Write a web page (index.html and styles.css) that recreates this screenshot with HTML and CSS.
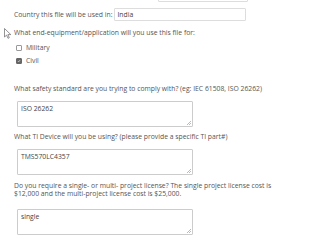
FILE: index.html
```html
<!DOCTYPE html>
<html lang="en">
<head>
    <meta charset="UTF-8">
    <title>License request form</title>
    <link rel="stylesheet" href="styles.css">
</head>
<body>
    <div class="form">
        <div class="row top-row">
            <input class="field field-short" type="text" value="">
        </div>

        <div class="row">
            <label class="inline-label">Country this file will be used in:</label>
            <input class="field field-country" type="text" value="India">
        </div>

        <div class="question pointer-row">
            <svg class="pointer" width="8" height="11" viewBox="0 0 8 11">
                <path d="M0.5 0.5 L0.5 9 L2.6 7.1 L4 10.3 L5.3 9.7 L3.9 6.6 L6.8 6.6 Z" fill="#fff" stroke="#666" stroke-width="0.7"/>
            </svg>
            What end-equipment/application will you use this file for:
        </div>
        <div class="choice first">
            <span class="box"></span> Military
        </div>
        <div class="choice">
            <span class="box checked">
                <svg width="6" height="6" viewBox="0 0 6 6"><path d="M1.3 3.1 L2.5 4.3 L4.7 1.6" fill="none" stroke="#fff" stroke-width="0.9"/></svg>
            </span> Civil
        </div>

        <div class="question spaced">What safety standard are you trying to comply with? (eg: IEC 61508, ISO 26262)</div>
        <textarea class="answer">ISO 26262</textarea>

        <div class="question">What TI Device will you be using? (please provide a specific TI part#)</div>
        <textarea class="answer">TMS570LC4357</textarea>

        <div class="question license">Do you require a single- or multi- project license? The single project license cost is<br>$12,000 and the multi-project license cost is $25,000.</div>
        <textarea class="answer last">single</textarea>
    </div>
</body>
</html>
```

FILE: styles.css
```css
body {
    margin: 0;
    background: #fff;
    font-family: "Open Sans", Arial, sans-serif;
    font-size: 6.8px;
    color: #555;
}
.form {
    margin-top: -11px;
    padding-left: 14px;
}
.row {
    display: flex;
    align-items: center;
    height: 13px;
}
.top-row {
    padding-left: 144px;
    margin-bottom: 6px;
}
.inline-label {
    margin-right: 2px;
}
.field {
    box-sizing: border-box;
    height: 13px;
    border: 1px solid #ddd;
    border-radius: 1px;
    font-family: inherit;
    font-size: 6.8px;
    color: #444;
    padding: 0 2px;
    outline: none;
}
.field-short {
    width: 90px;
}
.field-country {
    width: 132px;
}
.question {
    line-height: 8px;
    margin-top: 6px;
}
.pointer-row {
    position: relative;
    margin-top: 8px;
}
.pointer {
    position: absolute;
    left: -10px;
    top: -1px;
}
.choice {
    display: flex;
    align-items: center;
    gap: 4px;
    height: 13px;
    padding-left: 2px;
}
.choice.first {
    margin-top: 4px;
}
.box {
    box-sizing: border-box;
    width: 6px;
    height: 6px;
    border: 1px solid #999;
    border-radius: 1px;
    display: flex;
    align-items: center;
    justify-content: center;
}
.box.checked {
    background: #666;
    border-color: #666;
}
.spaced {
    margin-top: 18px;
}
.license {
    margin-top: 7px;
}
.answer {
    display: block;
    box-sizing: border-box;
    width: 176px;
    height: 26px;
    margin: 8px 0 0 3px;
    border: 1px solid #ccc;
    border-radius: 1px;
    font-family: inherit;
    font-size: 6.8px;
    color: #444;
    padding: 2px 3px;
    outline: none;
    resize: none;
    background: #fff linear-gradient(135deg, transparent 50%, #bbb 50%, #bbb 58%, transparent 58%, transparent 75%, #bbb 75%, #bbb 83%, transparent 83%) no-repeat right 1px bottom 1px / 4px 4px;
}
.answer.last {
    margin-top: 11px;
}
```
